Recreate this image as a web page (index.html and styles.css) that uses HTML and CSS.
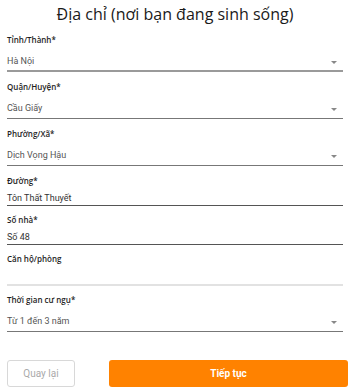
FILE: index.html
```html
<!DOCTYPE html>
<html lang="vi">
<head>
<meta charset="utf-8">
<link rel="stylesheet" href="styles.css">
</head>
<body>
<div class="page">
  <h1 class="title">Địa chỉ (nơi bạn đang sinh sống)</h1>

  <div class="field select-field">
    <div class="label">Tỉnh/Thành*</div>
    <div class="select focused">
      <span class="value">Hà Nội</span>
      <span class="arrow"></span>
    </div>
  </div>

  <div class="field select-field">
    <div class="label">Quận/Huyện*</div>
    <div class="select">
      <span class="value">Cầu Giấy</span>
      <span class="arrow"></span>
    </div>
  </div>

  <div class="field select-field">
    <div class="label">Phường/Xã*</div>
    <div class="select">
      <span class="value">Dịch Vọng Hậu</span>
      <span class="arrow"></span>
    </div>
  </div>

  <div class="field text-field">
    <div class="label">Đường*</div>
    <div class="input"><span class="value">Tôn Thất Thuyết</span></div>
  </div>

  <div class="field text-field">
    <div class="label">Số nhà*</div>
    <div class="input"><span class="value">Số 48</span></div>
  </div>

  <div class="field text-field empty-field">
    <div class="label">Căn hộ/phòng</div>
    <div class="input empty"></div>
  </div>

  <div class="field select-field">
    <div class="label">Thời gian cư ngụ*</div>
    <div class="select">
      <span class="value">Từ 1 đến 3 năm</span>
      <span class="arrow"></span>
    </div>
  </div>

  <div class="actions">
    <button class="btn btn-back">Quay lại</button>
    <button class="btn btn-next">Tiếp tục</button>
  </div>
</div>
</body>
</html>
```

FILE: styles.css
```css
* { box-sizing: border-box; }
html, body { margin: 0; padding: 0; background: #fff; }
body { font-family: "Open Sans", "Noto Sans", sans-serif; color: #222; }

.page {
  width: 350px;
  padding: 0 7px 0 7px;
  display: flex;
  flex-direction: column;
}

.title {
  margin: 0;
  height: 33px;
  font-size: 16px;
  line-height: 28px;
  font-weight: 500;
  text-align: center;
  color: #1a1a1a;
}

.field { display: flex; flex-direction: column; width: 336px; }

.label {
  font-size: 8px;
  font-weight: 600;
  line-height: 14px;
  height: 14px;
  color: #1e1e1e;
}

.value {
  font-family: Roboto, "Liberation Sans", sans-serif;
  font-size: 9px;
  color: #555;
  line-height: 13px;
  display: block;
}

.select-field { margin-bottom: 8px; }
.select {
  margin-top: 3px;
  height: 22px;
  padding-top: 5px;
  border-bottom: 1.5px solid #777;
  display: flex;
  justify-content: space-between;
  align-items: flex-start;
  line-height: 13px;
  font-size: 9px;
}
.select.focused { border-bottom: 2px solid #9a9a9a; }

.arrow {
  width: 0;
  height: 0;
  margin: 6px 6px 0 0;
  border-left: 3px solid transparent;
  border-right: 3px solid transparent;
  border-top: 3px solid #888;
}

.text-field { margin-bottom: 7px; }
.input {
  height: 18px;
  padding-top: 4px;
  border-bottom: 1.5px solid #555;
  line-height: 13px;
  font-size: 9px;
}
.text-field .value { color: #333; }

.input.empty {
  height: 20px;
  border-bottom: 2px solid #e2e2e2;
}

.actions {
  margin-top: 20px;
  display: flex;
  gap: 34px;
  width: 341px;
}

.btn {
  height: 27px;
  border-radius: 3px;
  font-family: Roboto, "Liberation Sans", sans-serif;
  font-size: 10px;
  padding: 0;
  cursor: pointer;
}
.btn-back {
  width: 68px;
  background: #fff;
  border: 1px solid #d8d8d8;
  color: #aaa;
}
.btn-next {
  flex: 1;
  background: #ff8200;
  border: none;
  color: #fff;
  font-weight: 700;
}
```
